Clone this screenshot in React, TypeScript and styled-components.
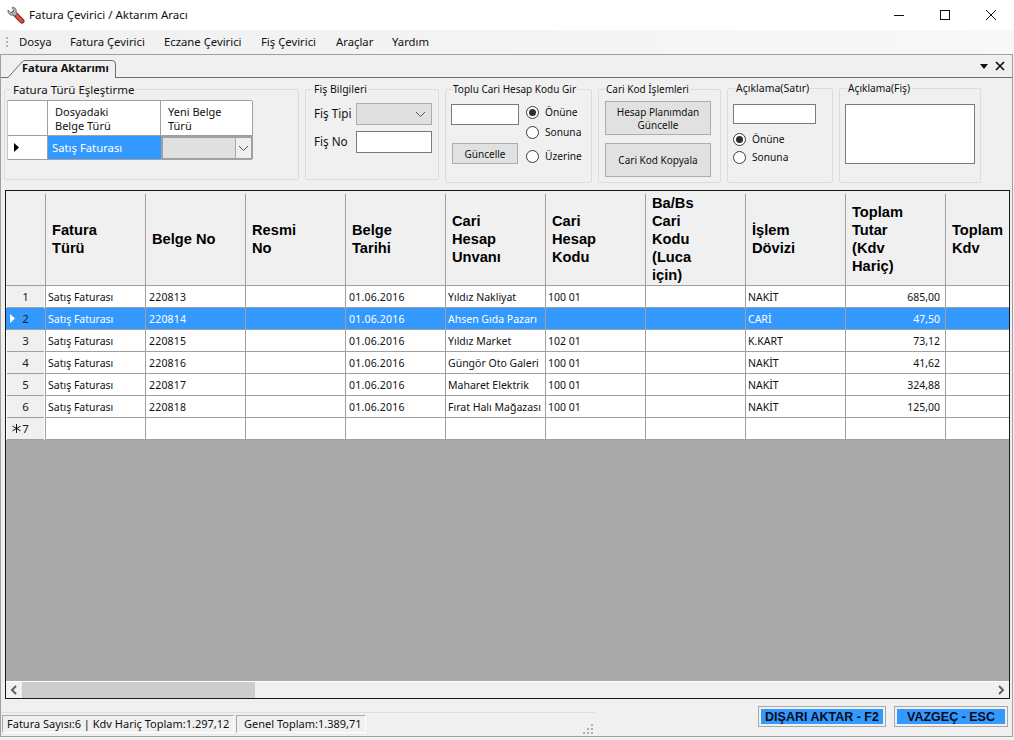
import React from 'react'
import styled, { createGlobalStyle } from 'styled-components'

const UI_FONT = `"Noto Sans", "Liberation Sans", sans-serif`

const GlobalStyle = createGlobalStyle`
  html, body {
    margin: 0;
    padding: 0;
    background: #f2f2f2;
  }
  * {
    box-sizing: border-box;
  }
`

const Window = styled.div`
  width: 1014px;
  height: 740px;
  display: flex;
  flex-direction: column;
  overflow: hidden;
  font-family: ${UI_FONT};
  font-size: 11px;
  color: #111;
  background: #f2f2f2;
`

const TitleBar = styled.div`
  height: 30px;
  flex: none;
  display: flex;
  align-items: center;
  background: #fff;
  padding-left: 7px;
`

const AppTitle = styled.span`
  margin: 0 0 2px 4px;
  font-size: 11.5px;
`

const WindowButtons = styled.div`
  margin-left: auto;
  display: flex;
`

const WindowButton = styled.div`
  width: 46px;
  height: 30px;
  display: flex;
  align-items: center;
  justify-content: center;
`

const MenuBar = styled.div`
  height: 24px;
  flex: none;
  display: flex;
  align-items: center;
  padding: 0 0 2px 6px;
  background: linear-gradient(to right, #f0f0f0, #f8f8f8);
`

const Grip = styled.div`
  width: 2px;
  height: 10px;
  margin: 2px 11px 0 0;
  background: repeating-linear-gradient(to bottom, #b5b5b5 0 2px, transparent 2px 4px);
`

const MenuItem = styled.span<{ $w: number }>`
  width: ${p => p.$w}px;
  font-size: 11.3px;
`

const Workspace = styled.div`
  height: 683px;
  flex: none;
  margin-right: 1px;
  display: flex;
  flex-direction: column;
  border: 1px solid #a0a0a0;
  background: #f0f0f0;
`

const TabStrip = styled.div`
  height: 23px;
  flex: none;
  display: flex;
  align-items: flex-end;
  border-bottom: 1px solid #6e6e6e;
  padding-left: 6px;
`

const Tab = styled.div`
  position: relative;
  width: 110px;
  height: 19px;
  margin-bottom: -1px;
  padding: 1px 0 0 15px;
  font-size: 11px;
  font-weight: 700;
`

const TabShape = styled.svg`
  position: absolute;
  left: 0;
  top: 0;
`

const TabLabel = styled.span`
  position: relative;
`

const TabTools = styled.div`
  margin-left: auto;
  margin-right: 7px;
  align-self: center;
  display: flex;
  align-items: center;
  gap: 7px;
`

const FilterRow = styled.div`
  height: 112px;
  flex: none;
  display: flex;
  align-items: flex-start;
  gap: 6px;
  padding-left: 3px;
`

const GroupBox = styled.div<{ $w: number; $h: number; $top?: number }>`
  position: relative;
  flex: none;
  width: ${p => p.$w}px;
  height: ${p => p.$h}px;
  margin-top: ${p => p.$top ?? 11}px;
  border: 1px solid #dcdcdc;
  border-radius: 2px;
`

const Legend = styled.span<{ $left?: number; $size?: number }>`
  position: absolute;
  top: -8px;
  left: ${p => p.$left ?? 7}px;
  padding: 0 1px;
  background: #f0f0f0;
  font-size: ${p => p.$size ?? 11}px;
  line-height: 15px;
  white-space: nowrap;
`

const MiniGrid = styled.div`
  margin: 10px 0 0 2px;
  width: 245px;
  display: grid;
  grid-template-columns: 40px 113px 92px;
  grid-template-rows: 35px 23px;
  background: #fff;
  border-top: 1px solid #a0a0a0;
  border-bottom: 1px solid #a0a0a0;
  border-left: 1px solid #c8c8c8;
`

const MiniHead = styled.div<{ $pad: number }>`
  padding: 4px 0 0 ${p => p.$pad}px;
  line-height: 14px;
  border-bottom: 1px solid #a0a0a0;
  border-right: 1px solid #a0a0a0;
`

const MiniMarker = styled.div`
  display: flex;
  align-items: center;
  padding-left: 6px;
  border-right: 1px solid #a0a0a0;
`

const MiniSelected = styled.div`
  display: flex;
  align-items: center;
  padding-left: 4px;
  font-size: 11.3px;
  background: #3399ff;
  color: #fff;
`

const MiniCombo = styled.div`
  display: flex;
  justify-content: flex-end;
  align-items: stretch;
  background: #e0e0e0;
  border: 2px solid #a0a0a0;
  border-bottom: 1px solid #a0a0a0;
`

const ComboArrow = styled.div`
  width: 16px;
  display: flex;
  align-items: center;
  justify-content: center;
  border-left: 1px solid #a8a8a8;
  background: #efefef;
`

const FisForm = styled.div`
  display: grid;
  grid-template-columns: 42px 76px;
  grid-auto-rows: 22px;
  row-gap: 6px;
  align-items: center;
  padding: 13px 0 0 8px;
`

const FormLabel = styled.span`
  font-size: 11.7px;
  padding-bottom: 2px;
`

const ComboBox = styled.div`
  height: 22px;
  display: flex;
  align-items: center;
  justify-content: flex-end;
  padding-right: 5px;
  background: #e0e0e0;
  border: 1px solid #adadad;
`

const TextBox = styled.input<{ $w: number; $h: number }>`
  display: block;
  width: ${p => p.$w}px;
  height: ${p => p.$h}px;
  padding: 1px 2px;
  background: #fff;
  border: 1px solid #7a7a7a;
  border-radius: 0;
  outline: none;
`

const TextArea = styled.textarea`
  display: block;
  width: 130px;
  height: 60px;
  margin: 15px 0 0 5px;
  resize: none;
  background: #fff;
  border: 1px solid #7a7a7a;
  border-radius: 0;
  outline: none;
`

const BulkLayout = styled.div`
  display: flex;
  padding: 14px 0 0 5px;
`

const BulkLeft = styled.div`
  width: 75px;
  display: flex;
  flex-direction: column;
  gap: 18px;
`

const Button = styled.button<{ $w: number; $h: number; $left?: number }>`
  display: block;
  width: ${p => p.$w}px;
  height: ${p => p.$h}px;
  margin: 0 0 0 ${p => p.$left ?? 0}px;
  padding: 1px 0 0;
  background: #e1e1e1;
  border: 1px solid #adadad;
  border-radius: 0;
  font-family: ${UI_FONT};
  font-size: 10px;
  line-height: 13px;
  color: #111;
`

const ButtonStack = styled.div`
  display: flex;
  flex-direction: column;
  gap: 8px;
  padding: 11px 0 0 6px;
`

const RadioColumn = styled.div`
  display: flex;
  flex-direction: column;
`

const RadioRow = styled.label<{ $top: number }>`
  height: 16px;
  margin-top: ${p => p.$top}px;
  display: flex;
  align-items: center;
  gap: 6px;
  font-size: 10.2px;
`

const RadioDot = styled.span<{ $checked?: boolean }>`
  width: 13px;
  height: 13px;
  flex: none;
  display: flex;
  align-items: center;
  justify-content: center;
  border: 1px solid #3c3c3c;
  border-radius: 50%;
  background: #fff;

  &::after {
    content: '';
    width: 7px;
    height: 7px;
    border-radius: 50%;
    background: ${p => (p.$checked ? '#2e2e2e' : 'transparent')};
  }
`

const LineDescription = styled.div`
  padding: 15px 0 0 5px;
`

const DataGrid = styled.div`
  height: 509px;
  flex: none;
  margin: 0 2px 0 4px;
  display: flex;
  flex-direction: column;
  overflow: hidden;
  border: 1px solid #1a1a1a;
  background: #aaaaaa;
`

const GridRow = styled.div<{ $selected?: boolean }>`
  flex: none;
  height: 22px;
  display: grid;
  grid-template-columns: 39px repeat(10, 100px);
  background: ${p => (p.$selected ? '#3399ff' : '#fff')};
  color: ${p => (p.$selected ? '#fff' : '#111')};
`

const HeaderRow = styled.div`
  flex: none;
  height: 95px;
  display: grid;
  grid-template-columns: 39px repeat(10, 100px);
  background: #f0f0f0;
  border-bottom: 1px solid #a0a0a0;
`

const HeaderCell = styled.div`
  height: 91px;
  margin-top: 3px;
  display: flex;
  align-items: center;
  padding: 0 0 2px 6px;
  border-left: 1px solid #a0a0a0;
  font-family: "Liberation Sans", Arial, sans-serif;
  font-size: 14.67px;
  font-weight: 700;
  line-height: 18px;
  color: #000;
`

const RowHead = styled.div<{ $selected?: boolean }>`
  position: relative;
  margin: 0 1px;
  padding-top: 1px;
  text-align: center;
  line-height: 20px;
  font-size: 11.5px;
  color: #222;
  background: ${p => (p.$selected ? '#3399ff' : '#f0f0f0')};
  border-bottom: 1px solid #a0a0a0;
`

const RowMarker = styled.svg<{ $left: number }>`
  position: absolute;
  left: ${p => p.$left}px;
  top: 6px;
`

const DataCell = styled.div<{ $right?: boolean; $digits?: boolean }>`
  padding: 1px ${p => (p.$right ? 5 : 0)}px 0 ${p => (p.$digits ? 3 : 2)}px;
  line-height: 20px;
  font-size: 10.5px;
  letter-spacing: ${p => (p.$digits ? '0.2px' : '0')};
  white-space: nowrap;
  text-align: ${p => (p.$right ? 'right' : 'left')};
  border-left: 1px solid #a0a0a0;
  border-bottom: 1px solid #a0a0a0;
`

const EmptyArea = styled.div`
  flex: 1;
`

const ScrollBar = styled.div`
  flex: none;
  height: 17px;
  display: flex;
  align-items: stretch;
  background: #f0f0f0;
  border-top: 1px solid #fff;
`

const ScrollArrow = styled.div`
  width: 16px;
  flex: none;
  display: flex;
  align-items: center;
  justify-content: center;
`

const ScrollThumb = styled.div`
  width: 233px;
  flex: none;
  background: #cdcdcd;
`

const ScrollTrack = styled.div`
  flex: 1;
`

const Footer = styled.div`
  flex: 1;
  display: flex;
  align-items: flex-start;
`

const StatusStrip = styled.div`
  position: relative;
  width: 594px;
  height: 24px;
  margin-top: 13px;
  display: flex;
  gap: 2px;
  padding: 2px 0 0 1px;
  border-top: 1px solid #dedede;
`

const StatusLabel = styled.div<{ $w: number; $pad: number }>`
  width: ${p => p.$w}px;
  height: 18px;
  padding-left: ${p => p.$pad}px;
  line-height: 16px;
  font-size: 11px;
  white-space: nowrap;
  border: 1px solid;
  border-color: #a8a8a8 #fff #fff #a8a8a8;
`

const SizeGrip = styled.svg`
  position: absolute;
  right: 1px;
  bottom: 1px;
`

const FooterActions = styled.div`
  margin: 7px 4px 0 auto;
  display: flex;
  gap: 8px;
`

const ActionButton = styled.button<{ $w: number }>`
  width: ${p => p.$w}px;
  height: 21px;
  margin: 0;
  padding: 0;
  background: #3399ff;
  border: 1px solid #a8a8a8;
  box-shadow: inset 0 0 0 2px #f0f0f0;
  border-radius: 0;
  font-family: "Liberation Sans", Arial, sans-serif;
  font-size: 12.5px;
  font-weight: 700;
  color: #0a0a14;
`

const Chevron = ({ dir = 'down', color = '#555' }: { dir?: 'down' | 'left' | 'right'; color?: string }) => {
  if (dir === 'down') {
    return (
      <svg width="11" height="7" viewBox="0 0 11 7">
        <polyline points="1,1 5.5,5.5 10,1" fill="none" stroke={color} strokeWidth="1" />
      </svg>
    )
  }
  const points = dir === 'left' ? '6,1 2,5 6,9' : '2,1 6,5 2,9'
  return (
    <svg width="8" height="10" viewBox="0 0 8 10">
      <polyline points={points} fill="none" stroke="#606060" strokeWidth="2" />
    </svg>
  )
}

const WrenchIcon = () => (
  <svg width="18" height="18" viewBox="0 0 18 18">
    <line x1="7" y1="7" x2="15" y2="15" stroke="#7c1d12" strokeWidth="5" strokeLinecap="round" />
    <line x1="7" y1="7" x2="15" y2="15" stroke="#e2533a" strokeWidth="3" strokeLinecap="round" />
    <path d="M1 4 L4 7 L7 5 L5 1.5 C7.5 0.5 10 3 9 6 L10 8 L8 10 L6 9 C3 10 0.5 7 1 4 Z" fill="#b0b0b0" stroke="#666" strokeWidth="0.8" />
  </svg>
)

const SATIS = 'Satış Faturası'

const columns = [
  ['Fatura', 'Türü'],
  ['Belge No'],
  ['Resmi', 'No'],
  ['Belge', 'Tarihi'],
  ['Cari', 'Hesap', 'Unvanı'],
  ['Cari', 'Hesap', 'Kodu'],
  ['Ba/Bs', 'Cari', 'Kodu', '(Luca', 'için)'],
  ['İşlem', 'Dövizi'],
  ['Toplam', 'Tutar', '(Kdv', 'Hariç)'],
  ['Toplam', 'Kdv'],
]

const rows = [
  { no: '220813', name: 'Yıldız Nakliyat', code: '100 01', cur: 'NAKİT', total: '685,00' },
  { no: '220814', name: 'Ahsen Gıda Pazarı', code: '', cur: 'CARİ', total: '47,50' },
  { no: '220815', name: 'Yıldız Market', code: '102 01', cur: 'K.KART', total: '73,12' },
  { no: '220816', name: 'Güngör Oto Galeri', code: '100 01', cur: 'NAKİT', total: '41,62' },
  { no: '220817', name: 'Maharet Elektrik', code: '100 01', cur: 'NAKİT', total: '324,88' },
  { no: '220818', name: 'Fırat Halı Mağazası', code: '100 01', cur: 'NAKİT', total: '125,00' },
]

const Radio = ({ label, checked, top = 0 }: { label: string; checked?: boolean; top?: number }) => (
  <RadioRow $top={top}>
    <RadioDot $checked={checked} />
    {label}
  </RadioRow>
)

export default function App() {
  return (
    <Window>
      <GlobalStyle />
      <TitleBar>
        <WrenchIcon />
        <AppTitle>Fatura Çevirici / Aktarım Aracı</AppTitle>
        <WindowButtons>
          <WindowButton>
            <svg width="10" height="10" viewBox="0 0 10 10"><line x1="0" y1="5.5" x2="10" y2="5.5" stroke="#111" /></svg>
          </WindowButton>
          <WindowButton>
            <svg width="10" height="10" viewBox="0 0 10 10"><rect x="0.5" y="0.5" width="9" height="9" fill="none" stroke="#111" /></svg>
          </WindowButton>
          <WindowButton>
            <svg width="10" height="10" viewBox="0 0 10 10"><path d="M0 0 L10 10 M10 0 L0 10" stroke="#111" /></svg>
          </WindowButton>
        </WindowButtons>
      </TitleBar>

      <MenuBar>
        <Grip />
        <MenuItem $w={51}>Dosya</MenuItem>
        <MenuItem $w={94}>Fatura Çevirici</MenuItem>
        <MenuItem $w={97}>Eczane Çevirici</MenuItem>
        <MenuItem $w={75}>Fiş Çevirici</MenuItem>
        <MenuItem $w={56}>Araçlar</MenuItem>
        <MenuItem $w={50}>Yardım</MenuItem>
      </MenuBar>

      <Workspace>
        <TabStrip>
          <Tab>
            <TabShape width="110" height="19" viewBox="0 0 110 19">
              <path d="M0.5 19 L15 3 Q16.5 1.5 18 1.5 L105 1.5 Q108.5 1.5 108.5 5 L108.5 19" fill="#f0f0f0" stroke="#6e6e6e" />
            </TabShape>
            <TabLabel>Fatura Aktarımı</TabLabel>
          </Tab>
          <TabTools>
            <svg width="8" height="5" viewBox="0 0 8 5"><polygon points="0,0 8,0 4,5" fill="#111" /></svg>
            <svg width="10" height="10" viewBox="0 0 10 10"><path d="M1 1 L9 9 M9 1 L1 9" stroke="#111" strokeWidth="1.7" /></svg>
          </TabTools>
        </TabStrip>

        <FilterRow>
          <GroupBox $w={295} $h={91}>
            <Legend $left={7} $size={11.5}>Fatura Türü Eşleştirme</Legend>
            <MiniGrid>
              <MiniHead $pad={0} />
              <MiniHead $pad={7}>Dosyadaki<br />Belge Türü</MiniHead>
              <MiniHead $pad={7}>Yeni Belge<br />Türü</MiniHead>
              <MiniMarker>
                <svg width="5" height="9" viewBox="0 0 5 9"><polygon points="0,0 5,4.5 0,9" fill="#000" /></svg>
              </MiniMarker>
              <MiniSelected>{SATIS}</MiniSelected>
              <MiniCombo>
                <ComboArrow><Chevron /></ComboArrow>
              </MiniCombo>
            </MiniGrid>
          </GroupBox>

          <GroupBox $w={134} $h={91}>
            <Legend $left={7} $size={10.5}>Fiş Bilgileri</Legend>
            <FisForm>
              <FormLabel>Fiş Tipi</FormLabel>
              <ComboBox><Chevron /></ComboBox>
              <FormLabel>Fiş No</FormLabel>
              <TextBox $w={76} $h={22} readOnly />
            </FisForm>
          </GroupBox>

          <GroupBox $w={147} $h={94}>
            <Legend $left={6} $size={10}>Toplu Cari Hesap Kodu Gir</Legend>
            <BulkLayout>
              <BulkLeft>
                <TextBox $w={68} $h={21} readOnly />
                <Button $w={66} $h={21} $left={1}>Güncelle</Button>
              </BulkLeft>
              <RadioColumn>
                <Radio label="Önüne" checked />
                <Radio label="Sonuna" top={4} />
                <Radio label="Üzerine" top={8} />
              </RadioColumn>
            </BulkLayout>
          </GroupBox>

          <GroupBox $w={123} $h={94}>
            <Legend $left={6} $size={10}>Cari Kod İşlemleri</Legend>
            <ButtonStack>
              <Button $w={106} $h={34}>Hesap Planımdan<br />Güncelle</Button>
              <Button $w={106} $h={34}>Cari Kod Kopyala</Button>
            </ButtonStack>
          </GroupBox>

          <GroupBox $w={106} $h={95} $top={10}>
            <Legend $left={7} $size={10.5}>Açıklama(Satır)</Legend>
            <LineDescription>
              <TextBox $w={83} $h={20} readOnly />
              <Radio label="Önüne" checked top={7} />
              <Radio label="Sonuna" top={2} />
            </LineDescription>
          </GroupBox>

          <GroupBox $w={142} $h={95} $top={10}>
            <Legend $left={7} $size={10.2}>Açıklama(Fiş)</Legend>
            <TextArea readOnly />
          </GroupBox>
        </FilterRow>

        <DataGrid>
          <HeaderRow>
            <div />
            {columns.map(lines => (
              <HeaderCell key={lines.join(' ')}>
                <div>
                  {lines.map(line => <div key={line}>{line}</div>)}
                </div>
              </HeaderCell>
            ))}
          </HeaderRow>

          {rows.map((row, i) => {
            const selected = i === 1
            return (
              <GridRow key={row.no} $selected={selected}>
                <RowHead $selected={selected}>
                  {selected && (
                    <RowMarker $left={3} width="5" height="9" viewBox="0 0 5 9">
                      <polygon points="0,0 5,4.5 0,9" fill="#fff" />
                    </RowMarker>
                  )}
                  {i + 1}
                </RowHead>
                <DataCell>{SATIS}</DataCell>
                <DataCell $digits>{row.no}</DataCell>
                <DataCell />
                <DataCell $digits>01.06.2016</DataCell>
                <DataCell>{row.name}</DataCell>
                <DataCell>{row.code}</DataCell>
                <DataCell />
                <DataCell>{row.cur}</DataCell>
                <DataCell $right>{row.total}</DataCell>
                <DataCell />
              </GridRow>
            )
          })}

          <GridRow>
            <RowHead>
              <RowMarker $left={5} width="9" height="9" viewBox="0 0 9 9">
                <path d="M4.5 0 V9 M0.5 2.2 L8.5 6.8 M8.5 2.2 L0.5 6.8" stroke="#111" strokeWidth="1" />
              </RowMarker>
              7
            </RowHead>
            {columns.map(lines => <DataCell key={lines.join(' ')} />)}
          </GridRow>

          <EmptyArea />

          <ScrollBar>
            <ScrollArrow><Chevron dir="left" /></ScrollArrow>
            <ScrollThumb />
            <ScrollTrack />
            <ScrollArrow><Chevron dir="right" /></ScrollArrow>
          </ScrollBar>
        </DataGrid>

        <Footer>
          <StatusStrip>
            <StatusLabel $w={232} $pad={4}>Fatura Sayısı:6 | Kdv Hariç Toplam:1.297,12</StatusLabel>
            <StatusLabel $w={130} $pad={7}>Genel Toplam:1.389,71</StatusLabel>
            <SizeGrip width="11" height="11" viewBox="0 0 11 11">
              <path d="M8 0h2v2H8z M8 4h2v2H8z M4 4h2v2H4z M8 8h2v2H8z M4 8h2v2H4z M0 8h2v2H0z" fill="#b0b0b0" />
            </SizeGrip>
          </StatusStrip>
          <FooterActions>
            <ActionButton $w={128}>DIŞARI AKTAR - F2</ActionButton>
            <ActionButton $w={114}>VAZGEÇ - ESC</ActionButton>
          </FooterActions>
        </Footer>
      </Workspace>
    </Window>
  )
}
